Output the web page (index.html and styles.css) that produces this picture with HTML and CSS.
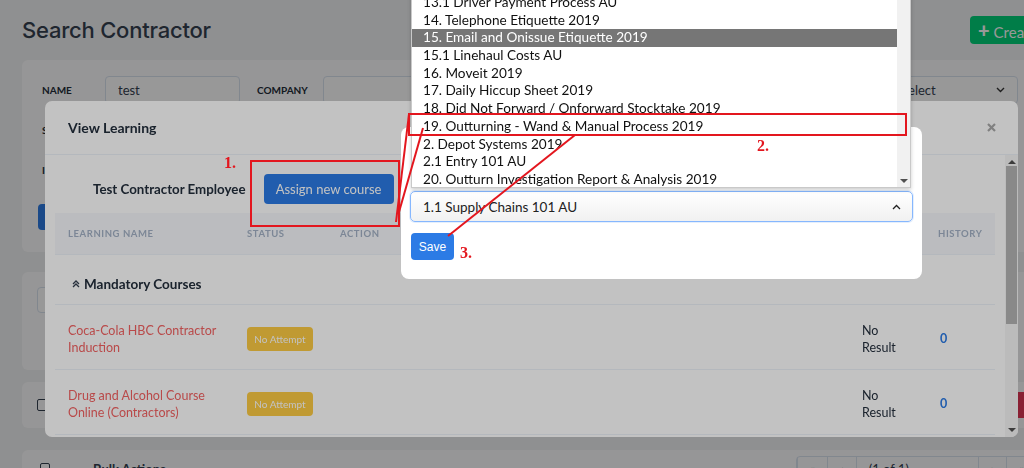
FILE: index.html
```html
<!DOCTYPE html>
<html lang="en">
<head>
  <meta charset="UTF-8" />
  <meta name="viewport" content="width=device-width, initial-scale=1.0"/>
  <title>Search Contractor</title>
  <link rel="stylesheet" href="styles.css">
</head>
<body>
  <div class="page">
    <div class="top-bar">
      <h1>Search Contractor</h1>
      <button class="btn btn-create"><span class="plus">+</span>Create Contractor</button>
    </div>

    <!-- Filters -->
    <div class="card filters">
      <div class="filter-row">
        <label class="field-label label-name">Name</label>
        <input class="form-control input-name" value="test">
        <label class="field-label label-company">Company</label>
        <input class="form-control input-company" value="">
        <div class="form-control select-status">
          <span>Select</span>
          <svg width="9" height="6" viewBox="0 0 9 6"><path d="M1 1l3.5 3.5L8 1" fill="none" stroke="#333" stroke-width="1.4"/></svg>
        </div>
      </div>
      <div class="filter-row">
        <label class="field-label label-name">Site</label>
        <input class="form-control input-name" value="">
      </div>
      <div class="filter-row">
        <label class="field-label label-name">Induction</label>
        <input class="form-control input-name" value="">
      </div>
      <button class="btn btn-search">Search</button>
    </div>

    <div class="card quick-search">
      <input class="form-control" value="">
    </div>

    <div class="card results">
      <div class="result-row">
        <span class="check"></span>
        <span class="result-name"></span>
        <button class="btn btn-delete" aria-label="Delete"></button>
      </div>
    </div>

    <div class="card bulk">
      <span class="check"></span>
      <span class="bulk-label">Bulk Actions</span>
      <div class="pager">
        <span>&laquo;</span><span>&lsaquo;</span><span class="pager-info">(1 of 1)</span><span>&rsaquo;</span><span>&raquo;</span>
      </div>
    </div>
  </div>

  <div class="backdrop back-first"></div>

  <!-- View Learning modal -->
  <div class="modal learning">
    <div class="modal-header">
      <h2>View Learning</h2>
      <svg class="close" width="9" height="9" viewBox="0 0 9 9"><path d="M1 1l7 7M8 1L1 8" stroke="#a9a9a9" stroke-width="2.2"/></svg>
    </div>
    <div class="modal-body">
      <div class="learning-content">
        <div class="employee-row">
          <span class="employee">Test Contractor Employee</span>
          <button class="btn btn-primary btn-assign">Assign new course</button>
        </div>

        <div class="learning-table">
          <div class="tr th">
            <div class="cell">Learning Name</div>
            <div class="cell">Status</div>
            <div class="cell">Action</div>
            <div class="cell"></div>
            <div class="cell">History</div>
          </div>
          <div class="tr group-row">
            <svg width="8" height="8" viewBox="0 0 8 8"><path d="M1 4l3-3 3 3M1 7l3-3 3 3" fill="none" stroke="#344050" stroke-width="1.3"/></svg>
            <span>Mandatory Courses</span>
          </div>
          <div class="tr course-row">
            <div class="cell course-name">Coca-Cola HBC Contractor Induction</div>
            <div class="cell"><span class="badge">No Attempt</span></div>
            <div class="cell"></div>
            <div class="cell result">No Result</div>
            <div class="cell history">0</div>
          </div>
          <div class="tr course-row">
            <div class="cell course-name">Drug and Alcohol Course Online (Contractors)</div>
            <div class="cell"><span class="badge">No Attempt</span></div>
            <div class="cell"></div>
            <div class="cell result">No Result</div>
            <div class="cell history">0</div>
          </div>
        </div>
      </div>
      <div class="scroll-track">
        <span class="arrow arrow-up"></span>
        <span class="thumb"></span>
        <span class="arrow arrow-down"></span>
      </div>
    </div>
  </div>

  <div class="backdrop back-second"></div>

  <!-- Assign course modal -->
  <div class="modal assign">
    <div class="select-box">
      <span>1.1 Supply Chains 101 AU</span>
      <svg width="9" height="6" viewBox="0 0 9 6"><path d="M1 5l3.5-3.5L8 5" fill="none" stroke="#222" stroke-width="1.3"/></svg>
    </div>
    <button class="btn btn-save">Save</button>
  </div>

  <!-- open course list -->
  <div class="course-list">
    <ul>
      <li>13.1 Driver Payment Process AU</li>
      <li>14. Telephone Etiquette 2019</li>
      <li class="hover">15. Email and Onissue Etiquette 2019</li>
      <li>15.1 Linehaul Costs AU</li>
      <li>16. Moveit 2019</li>
      <li>17. Daily Hiccup Sheet 2019</li>
      <li>18. Did Not Forward / Onforward Stocktake 2019</li>
      <li>19. Outturning - Wand &amp; Manual Process 2019</li>
      <li>2. Depot Systems 2019</li>
      <li>2.1 Entry 101 AU</li>
      <li>20. Outturn Investigation Report &amp; Analysis 2019</li>
    </ul>
    <div class="list-track"><span class="arrow arrow-down"></span></div>
  </div>

  <!-- step marks -->
  <svg class="marks" width="1024" height="468" viewBox="0 0 1024 468">
    <g fill="none" stroke="#e3161e" stroke-width="2">
      <rect x="251" y="161" width="148" height="65"/>
      <rect x="409" y="114" width="497" height="21"/>
      <path d="M409 114L396 222"/>
      <path d="M399 212L423 128"/>
      <path d="M575 135L448 236"/>
    </g>
    <g fill="#e3161e" font-family="'Liberation Serif', serif" font-weight="700" font-size="16">
      <text x="224" y="168">1.</text>
      <text x="757" y="151">2.</text>
      <text x="460" y="258">3.</text>
    </g>
  </svg>
</body>
</html>
```

FILE: styles.css
```css
* {
  margin: 0;
  padding: 0;
  box-sizing: border-box;
}

html, body {
  height: 100%;
  overflow: hidden;
}

body {
  background: #f0f1f3;
  color: #344050;
  font-family: 'Lato', 'Noto Sans', sans-serif;
  font-size: 13px;
}

button {
  font-family: inherit;
  border: 0;
}

.btn {
  border-radius: 4px;
  color: #fff;
  cursor: pointer;
}

/* ── page behind the modals ── */
.page {
  width: 1060px;
  padding: 0 22px;
}

.top-bar {
  display: grid;
  grid-template-columns: 948px auto;
  align-items: center;
  height: 60px;
}

.top-bar h1 {
  font-family: 'Inter', 'Lato', sans-serif;
  font-size: 22px;
  font-weight: 500;
  letter-spacing: -0.01em;
  color: #344050;
}

.btn-create {
  background: #00d27a;
  height: 28px;
  width: 168px;
  font-size: 15px;
  text-align: left;
  padding-left: 8px;
  white-space: nowrap;
}

.btn-create .plus {
  font-weight: 900;
  font-size: 20px;
  margin-right: 4px;
}

.card {
  background: #fcfcfd;
  border-radius: 6px;
}

.filters {
  padding: 16px 20px 22px;
}

.filter-row {
  display: flex;
  align-items: center;
  height: 28px;
  margin-bottom: 12px;
}

.field-label {
  font-size: 10px;
  font-weight: 700;
  text-transform: uppercase;
  color: #232c38;
}

.label-name { width: 63px; }
.label-company { width: 66px; margin-left: 17px; }

.form-control {
  height: 28px;
  border: 1px solid #d8e2ef;
  border-radius: 4px;
  background: #fff;
  font-family: inherit;
  font-size: 13px;
  color: #344050;
  padding: 0 12px;
}

.input-name { width: 135px; }
.input-company { flex: 1; }

.select-status {
  width: 130px;
  margin-left: 14px;
  display: flex;
  align-items: center;
  justify-content: space-between;
}

.btn-search {
  background: #2c7be5;
  height: 26px;
  width: 90px;
  margin-top: 8px;
  margin-left: -4px;
}

.quick-search {
  margin-top: 20px;
  padding: 15px;
  height: 98px;
}

.quick-search .form-control {
  width: 260px;
  height: 26px;
}

.results {
  margin-top: 12px;
  padding: 10px 0 10px 15px;
}

.result-row {
  display: flex;
  align-items: center;
  gap: 12px;
  height: 26px;
}

.check {
  width: 10px;
  height: 12px;
  border: 1.5px solid #344050;
  border-radius: 2px;
}

.result-name {
  flex: 1;
}

.btn-delete {
  background: #e63757;
  width: 33px;
  height: 26px;
}

.bulk {
  margin-top: 22px;
  padding: 6px 0 6px 18px;
  display: flex;
  align-items: center;
  gap: 43px;
}

.bulk-label {
  font-weight: 700;
}

.pager {
  margin-left: auto;
  display: flex;
  border: 1px solid #d8e2ef;
  border-radius: 4px;
}

.pager span {
  padding: 4px 12px;
  border-left: 1px solid #d8e2ef;
}

.pager .pager-info {
  width: 122px;
}

/* ── overlays ── */
.backdrop {
  position: fixed;
  inset: 0;
}

.back-first {
  background: rgba(0, 0, 0, 0.22);
  z-index: 10;
}

.back-second {
  background: rgba(0, 0, 0, 0.24);
  z-index: 30;
}

.modal {
  position: fixed;
  background: #fff;
}

.learning {
  left: 45px;
  top: 101px;
  width: 973px;
  height: 336px;
  border-radius: 7px;
  z-index: 20;
  display: flex;
  flex-direction: column;
  overflow: hidden;
}

.modal-header {
  height: 54px;
  flex-shrink: 0;
  display: flex;
  align-items: center;
  justify-content: space-between;
  padding: 0 22px 0 23px;
  border-bottom: 1px solid #edf2f9;
}

.modal-header h2 {
  font-size: 14px;
  font-weight: 700;
  color: #232e3c;
}

.modal-body {
  flex: 1;
  display: flex;
  min-height: 0;
}

.learning-content {
  flex: 1;
  padding: 19px 10px 0 10px;
  overflow: hidden;
}

.employee-row {
  display: flex;
  align-items: center;
  gap: 18px;
  margin-left: 38px;
  height: 30px;
  margin-bottom: 9px;
}

.employee {
  font-weight: 700;
  font-size: 13.3px;
  color: #232e3c;
}

.btn-primary {
  background: #2c7be5;
}

.btn-assign {
  height: 30px;
  width: 130px;
  font-size: 13px;
}

.learning-table .tr {
  display: grid;
  grid-template-columns: 179px 93px 522px 76px 1fr;
  padding-left: 13px;
  align-items: center;
  border-bottom: 1px solid #edf2f9;
}

.th {
  height: 42px;
  background: #f6f8fc;
  font-size: 9.5px;
  font-weight: 700;
  letter-spacing: 0.06em;
  text-transform: uppercase;
  color: #a3b1c5;
}

.tr.group-row {
  display: flex;
  gap: 4px;
  height: 50px;
  padding-left: 17px;
  padding-top: 8px;
  font-size: 13.5px;
  font-weight: 700;
  color: #232e3c;
}

.course-row {
  height: 65px;
  padding-top: 3px;
  font-size: 12.5px;
  line-height: 17px;
}

.course-name {
  color: #f36262;
  padding-right: 19px;
}

.badge {
  display: inline-block;
  width: 66px;
  height: 24px;
  line-height: 24px;
  text-align: center;
  border-radius: 4px;
  background: #fdcb43;
  color: #fff;
  font-size: 10px;
}

.result {
  color: #232e3c;
  padding-right: 30px;
}

.history {
  color: #2c7be5;
  font-weight: 700;
  padding-left: 2px;
}

.scroll-track {
  width: 13px;
  background: #f6f6f6;
  display: flex;
  flex-direction: column;
  align-items: center;
}

.scroll-track .thumb {
  width: 11px;
  height: 158px;
  margin-top: 2px;
  background: #b5b5b5;
}

.arrow {
  width: 0;
  height: 0;
  border-left: 4px solid transparent;
  border-right: 4px solid transparent;
}

.arrow-up {
  margin-top: 5px;
  border-bottom: 4px solid #505050;
}

.arrow-down {
  margin-top: auto;
  margin-bottom: 5px;
  border-top: 4px solid #505050;
}

/* ── assign course modal ── */
.assign {
  left: 401px;
  top: 127px;
  width: 521px;
  height: 152px;
  border-radius: 8px;
  z-index: 40;
  padding: 64px 9px 0;
}

.select-box {
  height: 31px;
  border: 1px solid #86b7fe;
  border-radius: 5px;
  background: linear-gradient(#fff, #f1f1f1);
  box-shadow: 0 0 0 1px rgba(44, 123, 229, 0.12);
  display: flex;
  align-items: center;
  justify-content: space-between;
  padding: 0 11px 0 12px;
  font-size: 13.5px;
  color: #222;
}

.btn-save {
  margin-top: 11px;
  margin-left: 1px;
  width: 43px;
  height: 27px;
  background: #2c7be5;
  font-family: 'Liberation Sans', Arial, sans-serif;
  font-size: 12px;
}

.course-list {
  position: fixed;
  left: 411px;
  top: -7px;
  width: 500px;
  height: 195px;
  background: #fff;
  border: 1px solid #c9c9c9;
  box-shadow: 0 2px 4px rgba(0, 0, 0, 0.2);
  z-index: 50;
  display: flex;
}

.course-list ul {
  flex: 1;
  list-style: none;
}

.course-list li {
  height: 17.7px;
  line-height: 17.7px;
  padding-left: 11px;
  font-size: 13.6px;
  color: #111;
  white-space: nowrap;
}

.course-list li.hover {
  background: #767676;
  color: #fff;
}

.list-track {
  width: 13px;
  background: #f1f1f1;
  display: flex;
  flex-direction: column;
  align-items: center;
}

.list-track .arrow-down {
  margin-bottom: 4px;
}

.marks {
  position: fixed;
  left: 0;
  top: 0;
  z-index: 60;
  pointer-events: none;
}
```
